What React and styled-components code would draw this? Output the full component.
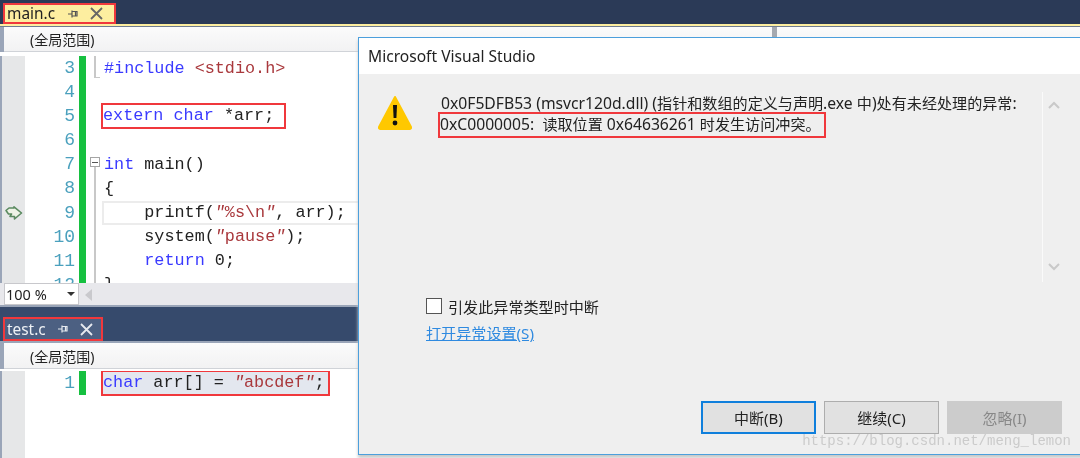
import React from "react";
import styled, { createGlobalStyle } from "styled-components";

const Global = createGlobalStyle`
  html, body { margin: 0; padding: 0; background: #fff; }
  #root { width: 1080px; height: 458px; overflow: hidden; }
`;
const UI = `"Noto Sans", "Noto Sans CJK SC", sans-serif`;
const CODE = `"Liberation Mono", "Noto Sans CJK SC", monospace`;

const Screen = styled.div`
  position: relative;
  width: 1080px;
  height: 458px;
  overflow: hidden;
  filter: blur(0.4px);
  font-family: ${UI};
  background: #fff;
`;
const Pane = styled.section`
  display: flex;
  flex-direction: column;
  height: ${p => p.$h}px;
  overflow: hidden;
  background: ${p => p.$frame};
`;
const TabStrip = styled.div`
  display: flex;
  align-items: flex-end;
  height: ${p => p.$h}px;
  padding-left: ${p => p.$pad}px;
  background: ${p => p.$bg};
  flex: none;
`;
const Tab = styled.div`
  display: flex;
  align-items: center;
  height: ${p => p.$h}px;
  width: ${p => p.$w}px;
  box-sizing: border-box;
  padding-left: 2px;
  border: 2.5px solid #f0383c;
  background: ${p => p.$bg};
  color: ${p => p.$fg};
  font-size: 15.4px;
`;
const TabName = styled.span`
  width: ${p => p.$w}px;
  flex: none;
`;
const TabIcon = styled.svg`
  flex: none;
  margin-right: ${p => p.$mr || 0}px;
  display: block;
`;
const AccentLine = styled.div`
  height: ${p => p.$h}px;
  background: ${p => p.$bg};
  flex: none;
`;
const NavRow = styled.div`
  display: flex;
  height: ${p => p.$h}px;
  flex: none;
  padding-left: 4px;
  background: #9aa5b8;
  box-sizing: border-box;
`;
const NavCell = styled.div`
  flex: ${p => p.$flex || "1"};
  display: flex;
  align-items: center;
  box-sizing: border-box;
  padding-left: 26px;
  background: linear-gradient(#fbfbfb, #f2f2f3);
  border-bottom: 1px solid #d0d3d8;
  font-size: 14px;
  color: #222;
`;
const NavSplit = styled.div`
  width: 5px;
  background: #a5a9b0;
  flex: none;
`;
const Editor = styled.div`
  flex: 1;
  min-height: 0;
  margin-left: 2px;
  overflow: hidden;
  background: #fff;
  font-family: ${CODE};
  font-size: 16.8px;
`;
const Row = styled.div`
  display: flex;
  height: 24.1px;
  align-items: stretch;
`;
const Glyph = styled.div`
  width: 23px;
  flex: none;
  background: #e6e7e8;
  display: flex;
  align-items: center;
  justify-content: center;
`;
const LineNo = styled.div`
  width: 50px;
  flex: none;
  text-align: right;
  color: #4aa0bd;
  line-height: 24px;
  font-family: "Liberation Mono", monospace;
  font-size: 18px;
`;
const Green = styled.div`
  width: 7px;
  margin-left: 4px;
  flex: none;
  background: ${p => (p.$on ? "#16c040" : "transparent")};
`;
const Fold = styled.div`
  position: relative;
  width: 14px;
  flex: none;
`;
const GuideLine = styled.span`
  position: absolute;
  left: 8px;
  top: ${p => p.$top}px;
  bottom: ${p => p.$bottom}px;
  width: 1.5px;
  background: #c8c8c8;
`;
const GuideTick = styled.span`
  position: absolute;
  left: 8px;
  bottom: 2px;
  width: 6px;
  height: 1.5px;
  background: #c8c8c8;
`;
const FoldBox = styled.span`
  position: absolute;
  left: 4px;
  top: 5px;
  width: 8px;
  height: 8px;
  border: 1px solid #a5a5a5;
  &::after {
    content: "";
    position: absolute;
    left: 1px;
    right: 1px;
    top: 3.5px;
    height: 1px;
    background: #555;
  }
`;
const Code = styled.div`
  flex: 1;
  min-width: 0;
  display: flex;
  align-items: center;
  margin-left: 2px;
  white-space: pre;
  color: #222;
  box-sizing: border-box;
  border: ${p => (p.$current ? "2px solid #ececec" : "2px solid transparent")};
  border-width: 2px 0 2px 2px;
`;
const Kw = styled.span`color: #3a3aff;`;
const Str = styled.span`color: #a9383c;`;
const Quote = styled.span`
  font-style: italic;
  color: ${p => p.$c || "#a9383c"};
`;
const Marked = styled.span`
  display: inline-block;
  line-height: 22px;
  padding: 0 ${p => p.$pr}px 0 0;
  margin-left: -1px;
  outline: 2.5px solid #f0383c;
  background: ${p => p.$bg || "transparent"};
`;
const StatusBar = styled.div`
  display: flex;
  height: 22px;
  margin-bottom: 2px;
  flex: none;
  background: #e8e8ec;
`;
const Zoom = styled.div`
  width: 75px;
  margin-left: 4px;
  box-sizing: border-box;
  background: #fff;
  border: 1px solid #c8c8cc;
  display: flex;
  align-items: center;
  justify-content: space-between;
  padding: 0 3px 0 1px;
  font-size: 14.5px;
  color: #222;
`;
const Caret = styled.span`
  width: 0;
  height: 0;
  border-left: 4px solid transparent;
  border-right: 4px solid transparent;
  border-top: 4px solid #333;
`;
const ScrollArrow = styled.span`
  width: 0;
  height: 0;
  margin: 6px 0 0 6px;
  border-top: 6px solid transparent;
  border-bottom: 6px solid transparent;
  border-right: 7px solid #c9c9cd;
`;

const Dialog = styled.div`
  position: absolute;
  left: 358px;
  top: 37px;
  width: 730px;
  height: 418px;
  box-sizing: border-box;
  border: 1px solid #4c9fdc;
  box-shadow: 0 3px 3px #c9c9c9;
  background: #efefef;
  display: flex;
  flex-direction: column;
  color: #222;
`;
const DialogTitle = styled.div`
  height: 36px;
  flex: none;
  background: #fff;
  display: flex;
  align-items: center;
  padding-left: 9px;
  font-size: 15.6px;
`;
const DialogBody = styled.div`
  display: flex;
  height: 209px;
  flex: none;
`;
const IconCol = styled.div`
  width: 82px;
  flex: none;
  padding: 20px 0 0 18px;
  box-sizing: border-box;
`;
const Message = styled.div`
  width: 601px;
  flex: none;
  padding-top: 19px;
  font-size: 15.1px;
  line-height: 21px;
  white-space: nowrap;
`;
const Lat = styled.span`
  font-size: 15.7px;
`;
const MsgMarked = styled.span`
  display: inline-block;
  margin: 0 0 0 -1px;
  padding: 0 3px 1px 0;
  line-height: 21px;
  outline: 2.5px solid #f0383c;
`;
const ScrollCol = styled.div`
  margin-top: 18px;
  width: 22px;
  height: 190px;
  flex: none;
  border-left: 1px solid #fafafa;
  display: flex;
  flex-direction: column;
  align-items: center;
  justify-content: space-between;
  padding: 9px 0 11px;
  box-sizing: border-box;
`;
const Options = styled.div`
  padding: 14px 0 0 67px;
  display: flex;
  flex-direction: column;
  gap: 8px;
`;
const CheckRow = styled.label`
  display: flex;
  align-items: center;
  gap: 6px;
  font-size: 15.1px;
  height: 18px;
`;
const CheckBox = styled.span`
  width: 14px;
  height: 14px;
  background: #fff;
  border: 1px solid #555;
  flex: none;
`;
const LinkText = styled.a`
  color: #2f8ae0;
  text-decoration: underline;
  font-size: 15.1px;
  line-height: 20px;
`;
const Buttons = styled.div`
  margin-top: auto;
  padding: 0 0 20px 342px;
  display: flex;
  gap: 8px;
`;
const Btn = styled.div`
  width: 115px;
  height: 33px;
  box-sizing: border-box;
  display: flex;
  align-items: center;
  justify-content: center;
  font-size: 15px;
  background: ${p => (p.$off ? "#cccccc" : "#e1e1e1")};
  color: ${p => (p.$off ? "#888" : "#222")};
  border: ${p => (p.$main ? "2px solid #0f7fdc" : "1.5px solid " + (p.$off ? "#cccccc" : "#adadad"))};
`;
const Watermark = styled.div`
  position: absolute;
  right: 9px;
  top: 433px;
  font-family: "Liberation Mono", monospace;
  font-size: 14px;
  color: #cbcbcb;
`;

const Pin = ({ c, mr }) => (
  <TabIcon width="12" height="10" viewBox="0 0 12 10" $mr={mr}>
    <path d="M1 5h4M5 1.5v7M5 2.5h5v4.5h-5M8.5 2.5v4.5" stroke={c} strokeWidth="1.2" fill="none" />
  </TabIcon>
);
const Close = ({ c }) => (
  <TabIcon width="13" height="13" viewBox="0 0 13 13">
    <path d="M1 1l11 11M12 1L1 12" stroke={c} strokeWidth="1.8" fill="none" />
  </TabIcon>
);
const Arrow = () => (
  <svg width="18" height="14" viewBox="0 0 18 14">
    <path d="M1 4.5L4 2h5V.8L16.5 7 9.5 13v-2.5H5l1.5-2.5L3.5 8z" fill="#eef3e6" stroke="#5b8a60" strokeWidth="1.6" strokeLinejoin="round" />
  </svg>
);
const Warning = () => (
  <svg width="36" height="38" viewBox="0 0 36 38">
    <path d="M18 3L34 33a1.5 1.5 0 0 1-1.4 2H3.4A1.5 1.5 0 0 1 2 33z" fill="#ffc800" stroke="#ffc800" strokeWidth="2" strokeLinejoin="round" />
    <path d="M16 11h4l-.6 13h-2.8z" fill="#111" />
    <circle cx="18" cy="29" r="2.4" fill="#111" />
  </svg>
);
const Chevron = ({ up }) => (
  <svg width="12" height="8" viewBox="0 0 12 8">
    <path d={up ? "M1 7l5-5 5 5" : "M1 1l5 5 5-5"} stroke="#c9c9c9" strokeWidth="2" fill="none" />
  </svg>
);

const Line = ({ n, fold, current, glyph, children, green = true }) => (
  <Row>
    <Glyph>{glyph}</Glyph>
    <LineNo>{n}</LineNo>
    <Green $on={green} />
    <Fold>
      {fold === "tick" && <><GuideLine $top={0} $bottom={2} /><GuideTick /></>}
      {fold === "box" && <><FoldBox /><GuideLine $top={15} $bottom={0} /></>}
      {fold === "line" && <GuideLine $top={0} $bottom={0} />}
    </Fold>
    <Code $current={current}>{children}</Code>
  </Row>
);

export default function App() {
  return (
    <Screen>
      <Global />
      <Pane $h={307} $frame="#9aa5b8">
        <TabStrip $h={24} $pad={3} $bg="#2b3a57">
          <Tab $h={21} $w={113} $bg="#fdeea0" $fg="#222">
            <TabName $w={60}>main.c</TabName>
            <Pin c="#555" mr={11} />
            <Close c="#666" />
          </Tab>
        </TabStrip>
        <AccentLine $h={2} $bg="#fdeea0" />
        <AccentLine $h={1} $bg="#6f7c92" />
        <NavRow $h={25}>
          <NavCell $flex="0 0 768px">(全局范围)</NavCell>
          <NavSplit />
          <NavCell />
        </NavRow>
        <AccentLine $h={4} $bg="#fff" />
        <Editor>
          <Line n={3} fold="tick"><span><Kw>#include</Kw> <Str>&lt;stdio.h&gt;</Str></span></Line>
          <Line n={4} />
          <Line n={5}><Marked $pr={10}><Kw>extern</Kw> <Kw>char</Kw> *arr;</Marked></Line>
          <Line n={6} />
          <Line n={7} fold="box"><span><Kw>int</Kw> main()</span></Line>
          <Line n={8} fold="line">{"{"}</Line>
          <Line n={9} fold="line" current glyph={<Arrow />}>
            <span>{"    printf("}<Quote>"</Quote><Str>%s\n</Str><Quote>"</Quote>{", arr);"}</span>
          </Line>
          <Line n={10} fold="line">
            <span>{"    system("}<Quote>"</Quote><Str>pause</Str><Quote>"</Quote>{");"}</span>
          </Line>
          <Line n={11} fold="line"><span>{"    "}<Kw>return</Kw> 0;</span></Line>
          <Line n={12} fold="line">{"}"}</Line>
        </Editor>
        <StatusBar>
          <Zoom>100 %<Caret /></Zoom>
          <ScrollArrow />
        </StatusBar>
      </Pane>
      <Pane $h={151} $frame="#9aa5b8">
        <TabStrip $h={34} $pad={3} $bg="#364a6c">
          <Tab $h={24} $w={100} $bg="#4c6082" $fg="#eef1f5">
            <TabName $w={50}>test.c</TabName>
            <Pin c="#e6e9ef" mr={11} />
            <Close c="#e6e9ef" />
          </Tab>
        </TabStrip>
        <AccentLine $h={2} $bg="#9aa5b8" />
        <NavRow $h={26}>
          <NavCell>(全局范围)</NavCell>
        </NavRow>
        <AccentLine $h={2} $bg="#fff" />
        <Editor>
          <Line n={1}>
            <Marked $bg="#e3e7ef" $pr={3}><Kw>char</Kw> arr[] = <Quote>"</Quote><Str>abcdef</Str><Quote>"</Quote>;</Marked>
          </Line>
          <Row><Glyph /></Row>
          <Row><Glyph /></Row>
          <Row><Glyph /></Row>
        </Editor>
      </Pane>

      <Dialog>
        <DialogTitle>Microsoft Visual Studio</DialogTitle>
        <DialogBody>
          <IconCol><Warning /></IconCol>
          <Message>
            <Lat>0x0F5DFB53 (msvcr120d.dll) (</Lat>指针和数组的定义与声明<Lat>.exe </Lat>中<Lat>)</Lat>处有未经处理的异常<Lat>:</Lat>
            <br />
            <MsgMarked><Lat>0xC0000005:&nbsp; </Lat>读取位置 <Lat>0x64636261 </Lat>时发生访问冲突。</MsgMarked>
          </Message>
          <ScrollCol>
            <Chevron up />
            <Chevron />
          </ScrollCol>
        </DialogBody>
        <Options>
          <CheckRow><CheckBox />引发此异常类型时中断</CheckRow>
          <LinkText>打开异常设置(S)</LinkText>
        </Options>
        <Buttons>
          <Btn $main>中断(B)</Btn>
          <Btn>继续(C)</Btn>
          <Btn $off>忽略(I)</Btn>
        </Buttons>
      </Dialog>
      <Watermark>https://blog.csdn.net/meng_lemon</Watermark>
    </Screen>
  );
}
